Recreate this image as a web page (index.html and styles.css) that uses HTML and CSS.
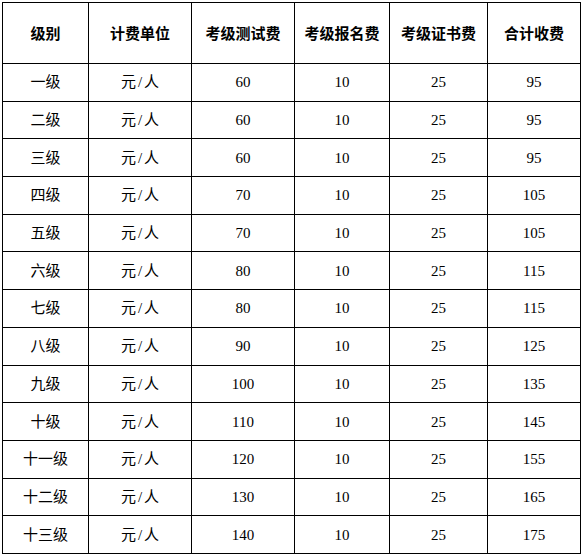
FILE: index.html
```html
<!DOCTYPE html>
<html lang="zh-CN">
<head>
<meta charset="utf-8">
<link rel="stylesheet" href="styles.css">
</head>
<body>
<table class="fees">
  <colgroup>
    <col class="c1"><col class="c2"><col class="c3"><col class="c4"><col class="c5"><col class="c6">
  </colgroup>
  <thead>
    <tr><th>级别</th><th>计费单位</th><th>考级测试费</th><th>考级报名费</th><th>考级证书费</th><th>合计收费</th></tr>
  </thead>
  <tbody>
    <tr><td>一级</td><td class="unit">元/人</td><td>60</td><td>10</td><td>25</td><td>95</td></tr>
    <tr><td>二级</td><td class="unit">元/人</td><td>60</td><td>10</td><td>25</td><td>95</td></tr>
    <tr><td>三级</td><td class="unit">元/人</td><td>60</td><td>10</td><td>25</td><td>95</td></tr>
    <tr><td>四级</td><td class="unit">元/人</td><td>70</td><td>10</td><td>25</td><td>105</td></tr>
    <tr><td>五级</td><td class="unit">元/人</td><td>70</td><td>10</td><td>25</td><td>105</td></tr>
    <tr><td>六级</td><td class="unit">元/人</td><td>80</td><td>10</td><td>25</td><td>115</td></tr>
    <tr><td>七级</td><td class="unit">元/人</td><td>80</td><td>10</td><td>25</td><td>115</td></tr>
    <tr><td>八级</td><td class="unit">元/人</td><td>90</td><td>10</td><td>25</td><td>125</td></tr>
    <tr><td>九级</td><td class="unit">元/人</td><td>100</td><td>10</td><td>25</td><td>135</td></tr>
    <tr><td>十级</td><td class="unit">元/人</td><td>110</td><td>10</td><td>25</td><td>145</td></tr>
    <tr><td>十一级</td><td class="unit">元/人</td><td>120</td><td>10</td><td>25</td><td>155</td></tr>
    <tr><td>十二级</td><td class="unit">元/人</td><td>130</td><td>10</td><td>25</td><td>165</td></tr>
    <tr><td>十三级</td><td class="unit">元/人</td><td>140</td><td>10</td><td>25</td><td>175</td></tr>
  </tbody>
</table>
</body>
</html>
```
FILE: styles.css
```css
html, body {
  background: #ffffff;
}
body {
  margin: 2px;
  font-family: "Liberation Serif", "Noto Sans CJK SC", serif;
  font-size: 15px;
  color: #000000;
}
.fees {
  border-collapse: collapse;
  table-layout: fixed;
  width: 578px;
}
.c1 { width: 86px; }
.c2 { width: 103px; }
.c3 { width: 103px; }
.c4 { width: 95px; }
.c5 { width: 98px; }
.c6 { width: 93px; }
.fees th,
.fees td {
  border: 1px solid #000000;
  padding: 0;
  text-align: center;
  vertical-align: middle;
  line-height: 18px;
}
.fees th {
  height: 60px;
  font-weight: bold;
  font-family: "Noto Sans CJK SC", sans-serif;
}
.fees td {
  height: 36.7px;
}
.fees td.unit {
  letter-spacing: 2px;
  padding-left: 2px;
}
```
